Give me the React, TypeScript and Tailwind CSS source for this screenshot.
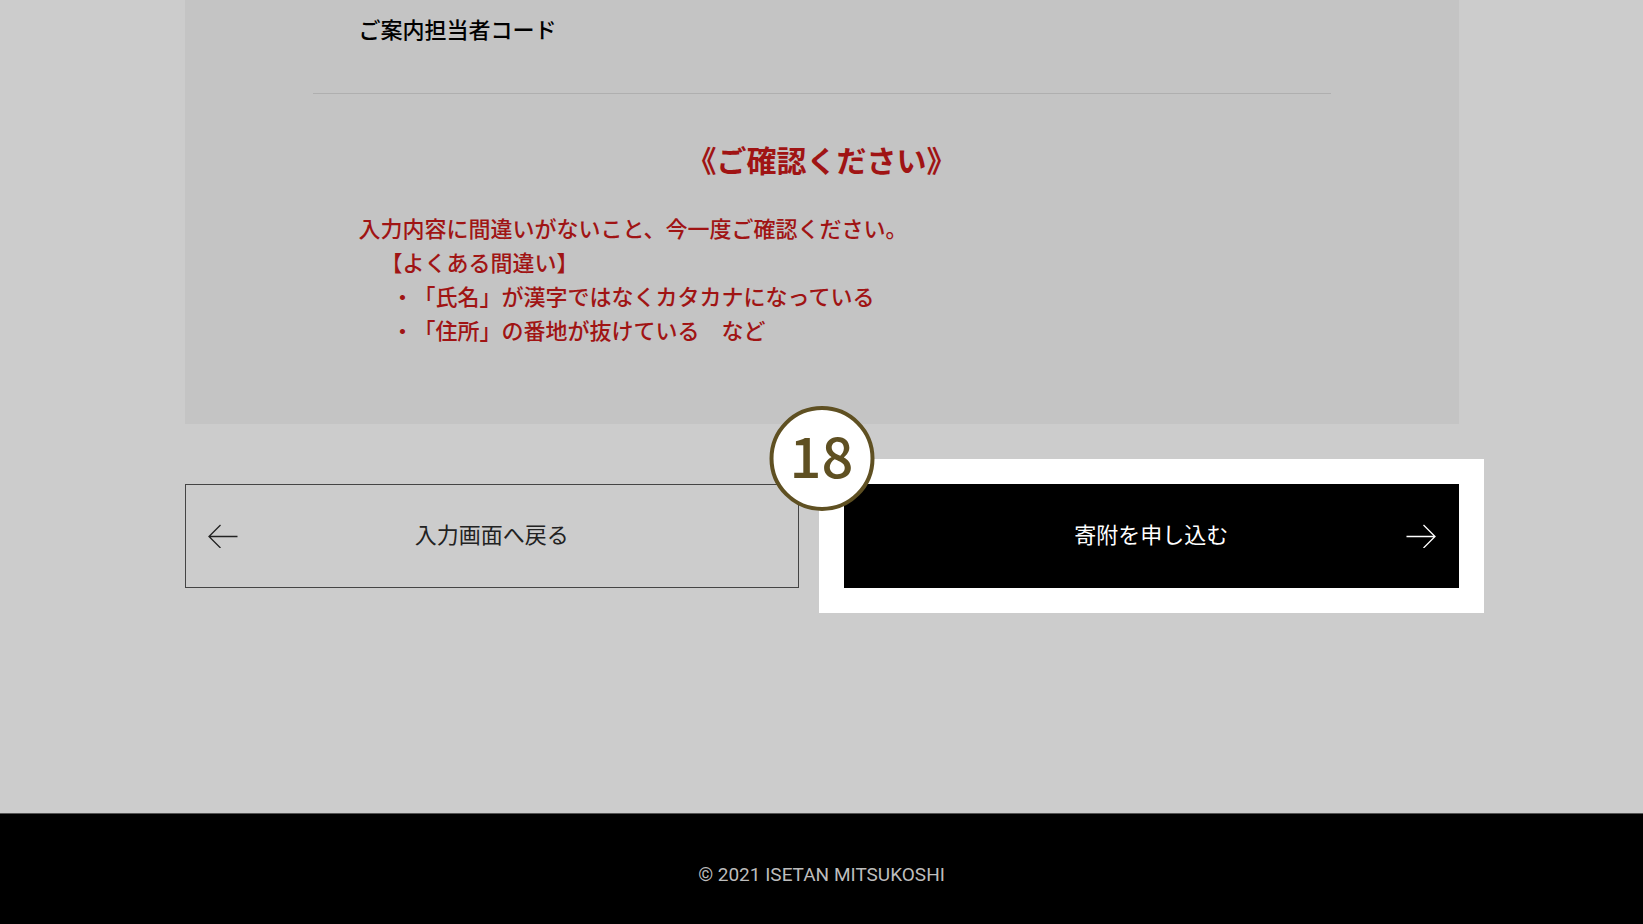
function ArrowLeft() {
  return (
    <svg className="h-6 w-[30px]" viewBox="0 0 30 24" fill="none" stroke="currentColor" strokeWidth="1.3" aria-hidden="true">
      <path d="M29.5 12.5H1M12.5 1L1 12.5L12.5 24" />
    </svg>
  );
}

function ArrowRight() {
  return (
    <svg className="h-6 w-[30px]" viewBox="0 0 30 24" fill="none" stroke="currentColor" strokeWidth="1.3" aria-hidden="true">
      <path d="M0.5 12.5H29M17.5 1L29 12.5L17.5 24" />
    </svg>
  );
}

export default function App() {
  return (
    <div className="flex min-h-screen flex-col bg-[#cccccc] font-['Noto_Sans_CJK_JP',sans-serif] text-[22px] leading-[34px] text-black [text-spacing-trim:space-all]">
      <main className="mx-auto w-full max-w-[1274px]">
        <section className="bg-[#c4c4c4] px-32 pb-[78px]">
          <div className="border-b border-[#afafaf] px-[46px] pt-[11px] pb-12">
            <h2 className="font-medium">ご案内担当者コード</h2>
          </div>
          <div className="px-[46px] pt-11 font-medium text-[#a01414]">
            <h3 className="mb-[29px] text-center text-[30px] leading-[43px] font-bold">《ご確認ください》</h3>
            <p>入力内容に間違いがないこと、今一度ご確認ください。</p>
            <p className="pl-[22px]">【よくある間違い】</p>
            <ul className="pl-[33px]">
              <li>・「氏名」が漢字ではなくカタカナになっている</li>
              <li>・「住所」の番地が抜けている　など</li>
            </ul>
          </div>
        </section>

        <div className="relative mt-[60px] mb-[225px] grid grid-cols-2 gap-[45px]">
          <button type="button" className="grid h-[104px] grid-cols-[30px_1fr_30px] items-center border border-[#444] px-[22px] text-[#222]">
            <ArrowLeft />
            <span className="pb-1.5">入力画面へ戻る</span>
          </button>
          <button type="submit" className="grid h-[104px] grid-cols-[30px_1fr_30px] items-center bg-black px-[23px] text-white ring-[25px] ring-white">
            <span className="col-start-2 pb-1.5">寄附を申し込む</span>
            <ArrowRight />
          </button>
          <span className="absolute -top-[78px] left-1/2 flex size-[105px] -translate-x-1/2 items-center justify-center rounded-full border-4 border-[#5f5022] bg-white pb-2.5 text-[56px] leading-none font-medium text-[#5f5022]">
            18
          </span>
        </div>
      </main>

      <footer className="flex grow items-center justify-center border-t border-[#555] bg-black pt-4 pb-1">
        <small className="font-['Roboto',sans-serif] text-[19px] leading-6 text-[#bdbdbd]">© 2021 ISETAN MITSUKOSHI</small>
      </footer>
    </div>
  );
}
